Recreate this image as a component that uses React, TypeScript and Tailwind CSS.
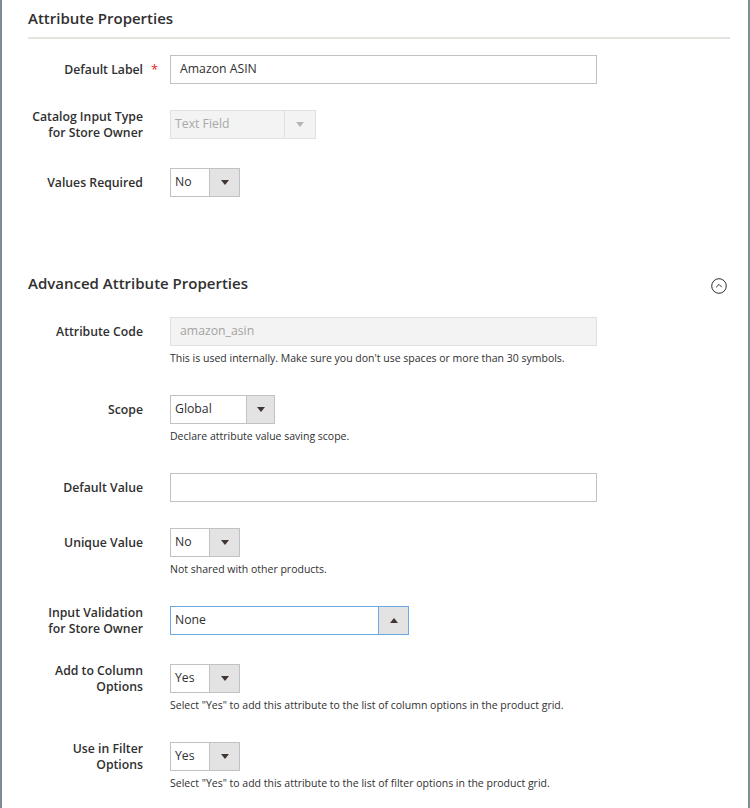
import React from 'react';

const font = { fontFamily: '"Open Sans", "Noto Sans", Arial, sans-serif' };

function Arrow({ up, disabled }: { up?: boolean; disabled?: boolean }) {
  return (
    <svg width="8" height="5" viewBox="0 0 8 5" className={up ? 'rotate-180' : ''}>
      <path d="M0 0 L8 0 L4 5 Z" fill={disabled ? '#b5b5b5' : '#41362f'} />
    </svg>
  );
}

interface SelectProps {
  value: string;
  width: string;
  arrow: string;
  disabled?: boolean;
  focused?: boolean;
}

function Select({ value, width, arrow, disabled, focused }: SelectProps) {
  const border = focused
    ? 'border-[#6ea8e3]'
    : disabled
      ? 'border-[#e0e0e0]'
      : 'border-[#c2c2c2]';
  return (
    <div
      className={`${width} h-[29px] flex border ${border} ${disabled ? 'bg-[#f3f3f3]' : 'bg-white'}`}
    >
      <div
        className={`flex-1 flex items-center pl-[4px] text-[12.25px] ${disabled ? 'text-[#a8a8a8]' : 'text-[#303030]'}`}
      >
        {value}
      </div>
      <div
        className={`${arrow} flex items-center justify-center border-l ${border} ${disabled ? 'bg-[#f3f3f3]' : 'bg-[#e3e3e3]'}`}
      >
        <Arrow up={focused} disabled={disabled} />
      </div>
    </div>
  );
}

function TextInput({ value, disabled }: { value?: string; disabled?: boolean }) {
  return (
    <div
      className={`w-[427px] h-[29px] flex items-center pl-[9px] border text-[12.25px] ${
        disabled
          ? 'bg-[#f3f3f3] border-[#e0e0e0] text-[#a3a3a3]'
          : 'bg-white border-[#c2c2c2] text-[#303030]'
      }`}
    >
      {value}
    </div>
  );
}

interface RowProps {
  label: React.ReactNode;
  required?: boolean;
  note?: string;
  mt: string;
  children: React.ReactNode;
}

function Row({ label, required, note, mt, children }: RowProps) {
  return (
    <div className={`flex ${mt}`}>
      <div className="w-[115px] h-[29px] relative flex items-center justify-end">
        <span className="text-right text-[12.25px] leading-[16px] font-semibold text-[#303030]">
          {label}
        </span>
        {required && (
          <span className="absolute left-full ml-[8px] top-[5px] text-[13px] text-[#e22626]">*</span>
        )}
      </div>
      <div className="ml-[27px] flex flex-col">
        {children}
        {note && (
          <div className="mt-[5px] text-[10.5px] leading-[14px] text-[#303030]">{note}</div>
        )}
      </div>
    </div>
  );
}

export default function App() {
  return (
    <div
      className="w-[750px] h-[808px] overflow-hidden bg-white border-x-2 border-[#7e8b93] pl-[26px] pr-[18px] pt-[7px]"
      style={font}
    >
      <div className="pb-[8px] border-b-2 border-[#e6e2dd]">
        <h2 className="text-[15px] leading-[22px] font-semibold text-[#303030]">
          Attribute Properties
        </h2>
      </div>

      <Row label="Default Label" required mt="mt-[16px]">
        <TextInput value="Amazon ASIN" />
      </Row>
      <Row
        label={
          <>
            Catalog Input Type
            <br />
            for Store Owner
          </>
        }
        mt="mt-[26px]"
      >
        <Select value="Text Field" width="w-[146px]" arrow="w-[31px]" disabled />
      </Row>
      <Row label="Values Required" mt="mt-[29px]">
        <Select value="No" width="w-[70px]" arrow="w-[30px]" />
      </Row>

      <div className="mt-[75px] flex items-center justify-between">
        <h2 className="text-[15px] leading-[22px] font-semibold text-[#303030]">
          Advanced Attribute Properties
        </h2>
        <svg width="16" height="16" viewBox="0 0 16 16" className="mr-[3px] mt-[5px]">
          <circle cx="8" cy="8" r="7.3" fill="none" stroke="#303030" strokeWidth="1" />
          <path d="M5.2 9.2 L8 6.4 L10.8 9.2" fill="none" stroke="#303030" strokeWidth="1" />
        </svg>
      </div>

      <Row
        label="Attribute Code"
        note="This is used internally. Make sure you don't use spaces or more than 30 symbols."
        mt="mt-[23px]"
      >
        <TextInput value="amazon_asin" disabled />
      </Row>
      <Row label="Scope" note="Declare attribute value saving scope." mt="mt-[30px]">
        <Select value="Global" width="w-[105px]" arrow="w-[28px]" />
      </Row>
      <Row label="Default Value" mt="mt-[30px]">
        <TextInput />
      </Row>
      <Row label="Unique Value" note="Not shared with other products." mt="mt-[26px]">
        <Select value="No" width="w-[70px]" arrow="w-[30px]" />
      </Row>
      <Row
        label={
          <>
            Input Validation
            <br />
            for Store Owner
          </>
        }
        mt="mt-[30px]"
      >
        <Select value="None" width="w-[239px]" arrow="w-[30px]" focused />
      </Row>
      <Row
        label={
          <>
            Add to Column
            <br />
            Options
          </>
        }
        note={'Select "Yes" to add this attribute to the list of column options in the product grid.'}
        mt="mt-[29px]"
      >
        <Select value="Yes" width="w-[70px]" arrow="w-[30px]" />
      </Row>
      <Row
        label={
          <>
            Use in Filter
            <br />
            Options
          </>
        }
        note={'Select "Yes" to add this attribute to the list of filter options in the product grid.'}
        mt="mt-[30px]"
      >
        <Select value="Yes" width="w-[70px]" arrow="w-[30px]" />
      </Row>
    </div>
  );
}
